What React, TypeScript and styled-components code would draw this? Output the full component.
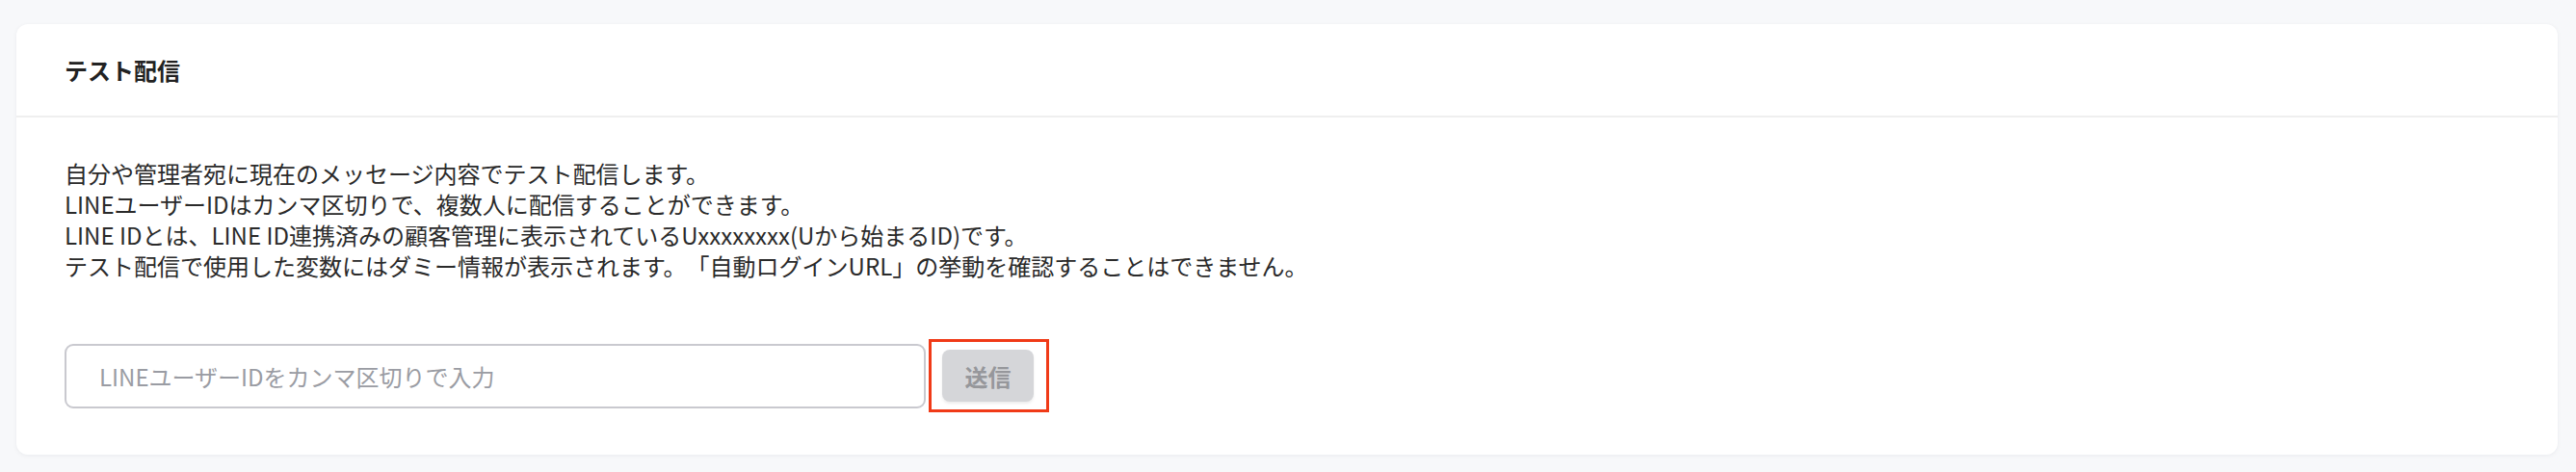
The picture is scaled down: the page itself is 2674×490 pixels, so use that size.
import React from 'react';
import styled, { createGlobalStyle } from 'styled-components';

const GlobalStyle = createGlobalStyle`
  body {
    margin: 0;
    background-color: #f7f8fa;
    font-family: "Noto Sans CJK JP", "Noto Sans", sans-serif;
    color: #2b2b2b;
    text-spacing-trim: space-all;
  }
`;

const Page = styled.div`
  padding: 25px 19px 18px 17px;
`;

const Card = styled.section`
  background-color: #ffffff;
  border-radius: 12px;
  box-shadow: 0 1px 4px rgba(20, 30, 50, 0.06);
`;

const CardHeader = styled.header`
  padding: 30px 50px 29px;
  border-bottom: 2px solid #efefef;
`;

const CardTitle = styled.h2`
  margin: 0;
  font-size: 24px;
  line-height: 36px;
  font-weight: 700;
  color: #222;
`;

const CardBody = styled.div`
  padding: 42px 50px 44px;
`;

const Description = styled.p`
  margin: 0 0 60px;
  font-size: 24px;
  line-height: 32px;
  color: #2a2a2a;
  text-spacing-trim: space-all;
`;

const SendRow = styled.div`
  display: flex;
  align-items: center;
`;

const IdInput = styled.input`
  box-sizing: border-box;
  width: 894px;
  height: 67px;
  padding: 0 34px;
  border: 2px solid #c9c9cf;
  border-radius: 9px;
  font-family: inherit;
  font-size: 24px;
  color: #333;
  background: #fff;
  outline: none;

  &::placeholder {
    color: #9a9ca3;
  }
`;

const Highlight = styled.div`
  margin-left: 3px;
  padding: 8px 13px 8px 11px;
  border: 3px solid #f03a17;
`;

const SendButton = styled.button<{ $disabled?: boolean }>`
  display: block;
  width: 95px;
  height: 54px;
  border: none;
  border-radius: 8px;
  background-color: ${p => (p.$disabled ? '#d5d6d9' : '#06c755')};
  color: ${p => (p.$disabled ? '#96979b' : '#fff')};
  box-shadow: 0 2px 3px rgba(0, 0, 0, 0.08);
  font-family: inherit;
  font-size: 24px;
  font-weight: 700;
  cursor: ${p => (p.$disabled ? 'default' : 'pointer')};
`;

const lines = [
  '自分や管理者宛に現在のメッセージ内容でテスト配信します。',
  'LINEユーザーIDはカンマ区切りで、複数人に配信することができます。',
  'LINE IDとは、LINE ID連携済みの顧客管理に表示されているUxxxxxxxx(Uから始まるID)です。',
  'テスト配信で使用した変数にはダミー情報が表示されます。「自動ログインURL」の挙動を確認することはできません。',
];

const App: React.FC = () => {
  return (
    <Page>
      <GlobalStyle />
      <Card>
        <CardHeader>
          <CardTitle>テスト配信</CardTitle>
        </CardHeader>
        <CardBody>
          <Description>
            {lines.map((line, i) => (
              <React.Fragment key={i}>
                {line}
                {i < lines.length - 1 && <br />}
              </React.Fragment>
            ))}
          </Description>
          <SendRow>
            <IdInput placeholder="LINEユーザーIDをカンマ区切りで入力" />
            <Highlight>
              <SendButton $disabled>送信</SendButton>
            </Highlight>
          </SendRow>
        </CardBody>
      </Card>
    </Page>
  );
};

export default App;
